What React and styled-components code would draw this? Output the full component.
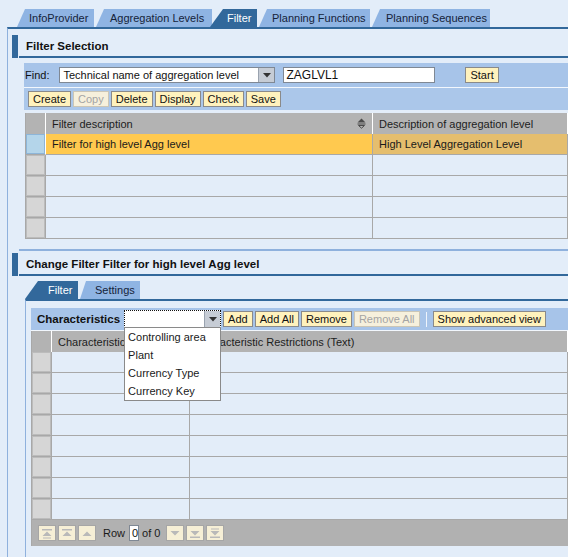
import React from "react";
import styled, { createGlobalStyle } from "styled-components";

const DARK = "#32689b";
const LIGHT_LINE = "#8fb1dd";

const GlobalStyle = createGlobalStyle`
  html, body { margin: 0; padding: 0; }
  body {
    background: #e3edf9;
    font-family: "Liberation Sans", Arial, sans-serif;
    font-size: 11px;
    color: #111;
    overflow: hidden;
  }
`;

const Page = styled.div`
  width: 568px;
  height: 557px;
  padding-top: 9px;
  box-sizing: border-box;
  display: flex;
  flex-direction: column;
`;

const TabStrip = styled.div`
  display: flex;
  gap: 2px;
  padding-left: ${(p) => p.$pl}px;
  margin-top: ${(p) => p.$mt || 0}px;
`;

const Tab = styled.div`
  width: ${(p) => p.$w}px;
  height: 18px;
  box-sizing: border-box;
  display: flex;
  align-items: center;
  padding-left: ${(p) => p.$pl}px;
  margin-left: ${(p) => p.$ml || 0}px;
  background: ${(p) => (p.$active ? DARK : "#8fb4e3")};
  color: ${(p) => (p.$active ? "#fff" : "#15233a")};
  clip-path: polygon(${(p) => p.$slant}px 0, 100% 0, 100% 100%, 0 100%);
  white-space: nowrap;
`;

const Main = styled.div`
  flex: 1;
  margin-left: 7px;
  border-top: 2px solid ${DARK};
  border-left: 1px solid ${LIGHT_LINE};
  padding: 6px 0 0 4px;
`;

const SectionHead = styled.div`
  display: flex;
  height: 23px;
  margin-top: ${(p) => p.$mt || 0}px;
`;

const HeadBar = styled.div`
  width: 6px;
  background: ${DARK};
`;

const HeadTitle = styled.div`
  flex: 1;
  margin-left: 1px;
  padding-left: 7px;
  border-bottom: 2px solid ${DARK};
  display: flex;
  align-items: center;
  font-weight: bold;
  font-size: 11.5px;
  color: #111;
`;

const SectionBody = styled.div`
  margin-left: 7px;
  padding: 5px 0 10px 5px;
  border-bottom: 2px solid ${LIGHT_LINE};
`;

const Bar = styled.div`
  display: flex;
  align-items: center;
  height: ${(p) => p.$h}px;
  background: ${(p) => p.$bg || "#a7c4e9"};
  padding-left: ${(p) => p.$pl || 0}px;
  border-bottom: ${(p) => (p.$line ? "1px solid #f2f7fd" : "none")};
  gap: ${(p) => p.$gap || 0}px;
`;

const Label = styled.span`
  font-weight: ${(p) => (p.$bold ? "bold" : "normal")};
  font-size: ${(p) => (p.$bold ? "11.5px" : "11px")};
  margin-right: ${(p) => p.$mr || 0}px;
  white-space: nowrap;
`;

const SelectBox = styled.div`
  position: relative;
  display: flex;
  width: ${(p) => p.$w}px;
  height: ${(p) => p.$h}px;
  box-sizing: border-box;
  background: #fff;
  border: 1px ${(p) => (p.$focus ? "dotted #111" : "solid #7f8894")};
  margin-right: ${(p) => p.$mr || 0}px;
`;

const SelectText = styled.div`
  flex: 1;
  padding-left: 3px;
  display: flex;
  align-items: center;
  white-space: nowrap;
  overflow: hidden;
`;

const DropBtn = styled.div`
  width: 15px;
  background: #c6ccd5;
  border-left: 1px solid #9aa3af;
  display: flex;
  align-items: center;
  justify-content: center;
`;

const TextInput = styled.div`
  width: ${(p) => p.$w}px;
  height: 16px;
  box-sizing: border-box;
  background: #fff;
  border: 1px solid #7f8894;
  padding-left: 2px;
  display: flex;
  align-items: center;
  margin-left: ${(p) => p.$ml || 0}px;
  margin-right: ${(p) => p.$mr || 0}px;
  font-size: ${(p) => p.$fs || 11}px;
`;

const Btn = styled.div`
  height: 16px;
  box-sizing: border-box;
  padding: 0 4px;
  display: flex;
  align-items: center;
  background: ${(p) => (p.$disabled ? "#f6f0dc" : "#fff2bd")};
  color: ${(p) => (p.$disabled ? "#a4a4a4" : "#111")};
  border: 1px solid ${(p) => (p.$disabled ? "#cbc6b6" : "#8a8a8a")};
  white-space: nowrap;
`;

const Divider = styled.div`
  width: 1px;
  height: 15px;
  background: #eef4fc;
  margin: 0 4px;
`;

const Table = styled.div`
  display: grid;
  grid-template-columns: ${(p) => p.$cols};
  grid-auto-rows: 21px;
  margin-left: ${(p) => p.$ml || 0}px;
  margin-top: ${(p) => p.$mt || 0}px;
  border-left: 1px solid #a8a8a8;
`;

const HeadCell = styled.div`
  background: #b3b3b3;
  border-right: 1px solid #fff;
  display: flex;
  align-items: center;
  justify-content: space-between;
  padding: 0 6px;
  color: #1d1d1d;
  white-space: nowrap;
  overflow: hidden;
`;

const Cell = styled.div`
  background: ${(p) => p.$bg || "transparent"};
  border-right: 1px solid #a8a8a8;
  border-bottom: 1px solid #a8a8a8;
  display: flex;
  align-items: center;
  padding-left: 6px;
  white-space: nowrap;
  overflow: hidden;
  color: #1a1a1a;
`;

const SelCell = styled.div`
  background: ${(p) => (p.$selected ? "#b4d5ea" : "#d6d6d6")};
  border-right: 1px solid ${(p) => (p.$selected ? "#fff" : "#a8a8a8")};
  border-bottom: 1px solid #a8a8a8;
  box-shadow: inset 0 0 0 1px ${(p) => (p.$selected ? "#8db5d8" : "#bcbcbc")};
`;

const Panel = styled.div`
  margin-left: 13px;
  border-top: 2px solid ${DARK};
  border-left: 1px solid ${LIGHT_LINE};
  border-bottom: 1px solid ${LIGHT_LINE};
  padding: 7px 0 11px 5px;
`;

const Popup = styled.div`
  position: absolute;
  top: 100%;
  left: -1px;
  width: 97px;
  box-sizing: border-box;
  background: #fff;
  border: 1px solid #8a8a8a;
  z-index: 5;
`;

const PopupItem = styled.div`
  height: 18px;
  line-height: 18px;
  padding-left: 3px;
  color: #1a1a1a;
  white-space: nowrap;
`;

const Footer = styled.div`
  height: 26px;
  background: #b1b1b1;
  border-left: 1px solid #a8a8a8;
  display: flex;
  align-items: center;
  padding-left: 6px;
  gap: 2px;
`;

const NavBtn = styled.div`
  width: 18px;
  height: 16px;
  box-sizing: border-box;
  background: #f6efd6;
  border: 1px solid #a6a6a6;
  display: flex;
  align-items: center;
  justify-content: center;
`;

const RowLabel = styled.span`
  margin: 0 ${(p) => p.$mr}px 0 ${(p) => p.$ml}px;
  color: #1a1a1a;
  white-space: nowrap;
`;

const Triangle = () => (
  <svg width="8" height="5" viewBox="0 0 8 5">
    <polygon points="0,0 8,0 4,4.5" fill="#333" />
  </svg>
);

const SortIcon = () => (
  <svg width="9" height="11" viewBox="0 0 9 11">
    <polygon points="4.5,0.5 8.5,4.5 0.5,4.5" fill="#4a4a4a" />
    <line x1="0.5" y1="6" x2="8.5" y2="6" stroke="#4a4a4a" strokeWidth="1" />
    <polygon points="1.5,7.5 7.5,7.5 4.5,10.2" fill="none" stroke="#4a4a4a" strokeWidth="1" />
  </svg>
);

const NavIcon = ({ kind }) => {
  const c = "#b9b9b9";
  const down = kind.startsWith("down");
  const g = (
    <g>
      {(kind.endsWith("first") || kind.endsWith("page")) && <rect x="1" y="1" width="10" height="1.5" fill={c} />}
      <polygon points="6,3.5 10.5,8 1.5,8" fill={c} />
      {kind.endsWith("first") && <rect x="2" y="9.5" width="8" height="1" fill={c} />}
    </g>
  );
  return (
    <svg width="12" height="11" viewBox="0 0 12 11">
      {down ? <g transform="translate(0 11) scale(1 -1)">{g}</g> : g}
    </svg>
  );
};

const emptyRows = (n) => Array.from({ length: n }, (_, i) => i);

export default function App() {
  return (
    <Page>
      <GlobalStyle />
      <TabStrip $pl={17}>
        <Tab $w={77} $slant={8} $pl={12}>InfoProvider</Tab>
        <Tab $w={116} $slant={8} $pl={14}>Aggregation Levels</Tab>
        <Tab $w={47} $active $slant={13} $pl={17} $ml={-4}>Filter</Tab>
        <Tab $w={111} $slant={8} $pl={13}>Planning Functions</Tab>
        <Tab $w={118} $slant={8} $pl={14}>Planning Sequences</Tab>
      </TabStrip>

      <Main>
        <SectionHead>
          <HeadBar />
          <HeadTitle>Filter Selection</HeadTitle>
        </SectionHead>
        <SectionBody>
          <Bar $h={24} $pl={1} $line>
            <Label $mr={10}>Find:</Label>
            <SelectBox $w={216} $h={16}>
              <SelectText>Technical name of aggregation level</SelectText>
              <DropBtn><Triangle /></DropBtn>
            </SelectBox>
            <TextInput $w={152} $ml={8} $mr={30} $fs={12}>ZAGLVL1</TextInput>
            <Btn>Start</Btn>
          </Bar>
          <Bar $h={22} $pl={4} $gap={2} $bg="#abc7ea">
            <Btn>Create</Btn>
            <Btn $disabled>Copy</Btn>
            <Btn>Delete</Btn>
            <Btn>Display</Btn>
            <Btn>Check</Btn>
            <Btn>Save</Btn>
          </Bar>
          <Table $cols="20px 327px 1fr" $ml={1} $mt={3}>
            <HeadCell />
            <HeadCell>
              Filter description
              <SortIcon />
            </HeadCell>
            <HeadCell>Description of aggregation level</HeadCell>

            <SelCell $selected />
            <Cell $bg="#ffc94f">Filter for high level Agg level</Cell>
            <Cell $bg="#e5be6e">High Level Aggregation Level</Cell>

            {emptyRows(4).map((i) => (
              <React.Fragment key={i}>
                <SelCell />
                <Cell />
                <Cell />
              </React.Fragment>
            ))}
          </Table>
        </SectionBody>

        <SectionHead $mt={2}>
          <HeadBar />
          <HeadTitle>Change Filter Filter for high level Agg level</HeadTitle>
        </SectionHead>

        <TabStrip $pl={13} $mt={5}>
          <Tab $w={53} $active $slant={13} $pl={23}>Filter</Tab>
          <Tab $w={60} $slant={6} $pl={15}>Settings</Tab>
        </TabStrip>
        <Panel>
          <Bar $h={22} $pl={6} $gap={2} $line>
            <Label $bold $mr={2}>Characteristics</Label>
            <SelectBox $w={97} $h={18} $focus>
              <SelectText />
              <DropBtn><Triangle /></DropBtn>
              <Popup>
                <PopupItem>Controlling area</PopupItem>
                <PopupItem>Plant</PopupItem>
                <PopupItem>Currency Type</PopupItem>
                <PopupItem>Currency Key</PopupItem>
              </Popup>
            </SelectBox>
            <Btn>Add</Btn>
            <Btn>Add All</Btn>
            <Btn>Remove</Btn>
            <Btn $disabled>Remove All</Btn>
            <Divider />
            <Btn>Show advanced view</Btn>
          </Bar>
          <Table $cols="20px 138px 1fr">
            <HeadCell />
            <HeadCell>Characteristic</HeadCell>
            <HeadCell>Characteristic Restrictions (Text)</HeadCell>
            {emptyRows(8).map((i) => (
              <React.Fragment key={i}>
                <SelCell />
                <Cell />
                <Cell />
              </React.Fragment>
            ))}
          </Table>
          <Footer>
            <NavBtn><NavIcon kind="up-first" /></NavBtn>
            <NavBtn><NavIcon kind="up-page" /></NavBtn>
            <NavBtn><NavIcon kind="up" /></NavBtn>
            <RowLabel $ml={5} $mr={2}>Row</RowLabel>
            <TextInput $w={10} $fs={11}>0</TextInput>
            <RowLabel $ml={1} $mr={4}>of 0</RowLabel>
            <NavBtn><NavIcon kind="down" /></NavBtn>
            <NavBtn><NavIcon kind="down-page" /></NavBtn>
            <NavBtn><NavIcon kind="down-first" /></NavBtn>
          </Footer>
        </Panel>
      </Main>
    </Page>
  );
}
